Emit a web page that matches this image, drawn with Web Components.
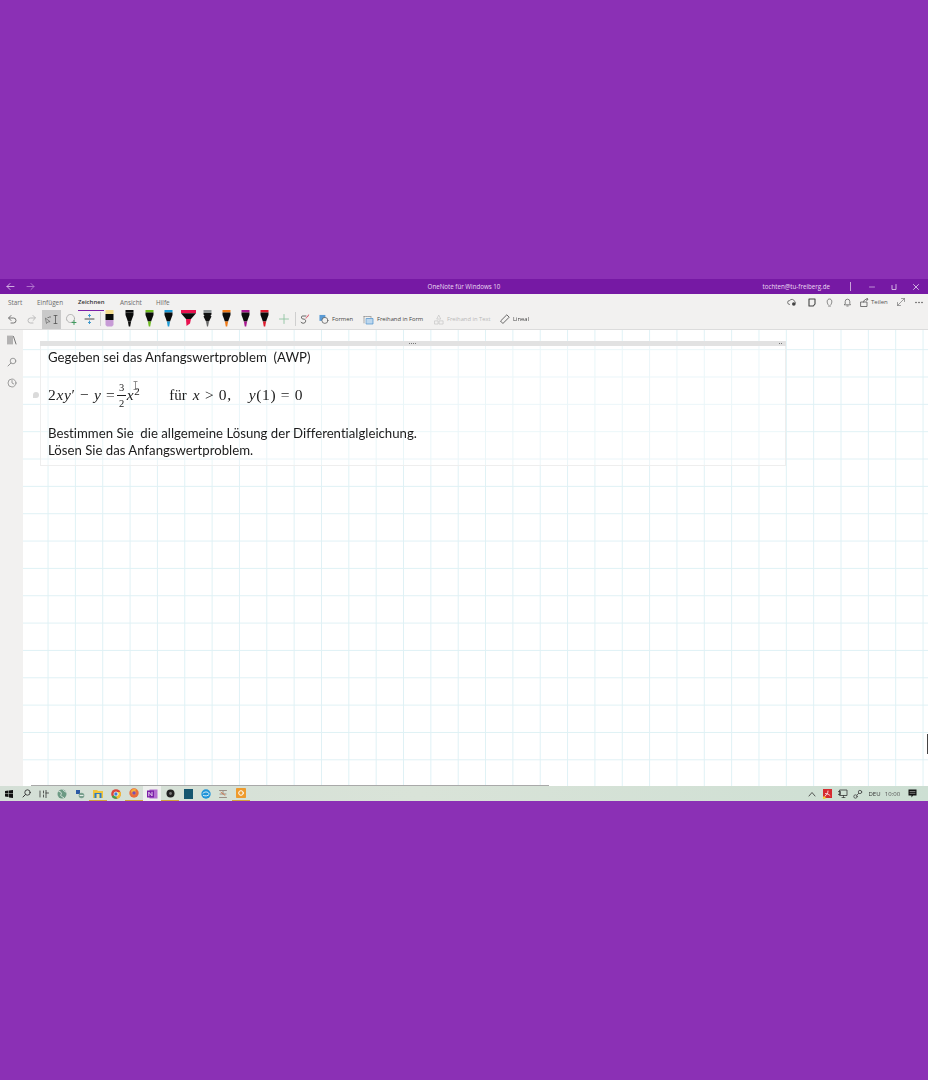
<!DOCTYPE html>
<html lang="de"><head><meta charset="utf-8"><title>OneNote</title>
<style>
html,body{margin:0;padding:0;background:#8b30b5}
body{width:928px;height:1080px;overflow:hidden;display:flex;flex-direction:column;padding-top:279px;box-sizing:border-box;font-family:"Open Sans","Liberation Sans",sans-serif}
</style></head><body>
<app-window>
  <title-bar></title-bar>
  <ribbon-tabs></ribbon-tabs>
  <ribbon-tools></ribbon-tools>
  <work-area></work-area>
  <task-bar></task-bar>
</app-window>
<script>
const def=(n,html)=>customElements.define(n,class extends HTMLElement{
  connectedCallback(){ if(this.shadowRoot)return; this.attachShadow({mode:'open'}).innerHTML=html; }
});
const ic=(w,h,vb,body,extra='')=>`<svg width="${w}" height="${h}" viewBox="${vb}" fill="none" stroke-linecap="round" stroke-linejoin="round" ${extra}>${body}</svg>`;

def('app-window',`<style>:host{display:flex;flex-direction:column;height:522px;filter:blur(.45px);overflow:hidden}</style><slot></slot>`);

def('title-bar',`<style>
:host{display:grid;grid-template-columns:1fr auto 1fr;align-items:center;height:15px;background:#7619a4;color:#ecdcf3;font-size:6.2px;flex:none}
.nav{display:flex;padding-left:6px;gap:11px}
.r{display:flex;align-items:center;justify-content:flex-end;padding-right:8px}
.sep{width:1px;height:9px;background:#c9a3da;margin-left:20px}
.w{display:flex;align-items:center;margin-left:17px;gap:14px}
</style>
<div class="nav">
${ic(9,9,'0 0 9 9','<path d="M8 4.500H1M4 1.500 1 4.500l3 3" stroke="#d9bde8" stroke-width=".9"/>')}
${ic(9,9,'0 0 9 9','<path d="M1 4.500h7M5 1.500l3 3-3 3" stroke="#b57cd0" stroke-width=".9"/>')}
</div>
<div>OneNote für Windows 10</div>
<div class="r"><span>tochten@tu-freiberg.de</span>
<div class="sep"></div>
<div class="w">
${ic(8,8,'0 0 8 8','<path d="M1.500 4h5" stroke="#c79fdb" stroke-width=".9"/>')}
${ic(8,8,'0 0 8 8','<path d="M2 2.500v4h4v-5" stroke="#dcc3ea" stroke-width=".9"/>')}
${ic(8,8,'0 0 8 8','<path d="M1.500 1.500l5 5M6.500 1.500l-5 5" stroke="#dcc3ea" stroke-width=".9"/>')}
</div></div>`);

def('ribbon-tabs',`<style>
:host{display:flex;height:16px;background:#f2f1f0;color:#6a6a6a;font-size:6.4px;flex:none;align-items:center;box-sizing:border-box;padding-left:8px;justify-content:space-between}
.l{display:flex;align-items:center}
span{white-space:nowrap}
.a{color:#333;font-weight:600;position:relative;font-size:6px}
.a::after{content:"";position:absolute;left:0;right:0;top:12px;height:1.300px;background:#7a1fa8}
.right{display:flex;align-items:center;color:#555;padding-right:5px}
svg{flex:none}
</style>
<div class="l"><span style="width:29px">Start</span><span style="width:41px">Einfügen</span><span class="a" style="width:26px;margin-right:16px">Zeichnen</span><span style="width:36px">Ansicht</span><span>Hilfe</span></div>
<div class="right">
${ic(10,9,'0 0 10 9','<path d="M2.500 6.500a2 2 0 0 1 .3-4 2.600 2.600 0 0 1 4.600.6 1.700 1.700 0 0 1 .6 2.600" stroke="#555" stroke-width=".8"/><circle cx="6.800" cy="6" r="1.800" fill="#444"/>')}
<span style="width:10px"></span>
${ic(10,9,'0 0 10 9','<path d="M2 1h6v5L6.300 8H2z" stroke="#444" stroke-width="1.100"/>')}
<span style="width:8px"></span>
${ic(9,9,'0 0 9 9','<path d="M3 6.500C1.500 4 2 1 4.500 1S7.500 4 6 6.500M3.500 8h2" stroke="#666" stroke-width=".8"/>')}
<span style="width:9px"></span>
${ic(9,9,'0 0 9 9','<path d="M1.500 6.800h6L6.800 5.500V3.500a2.300 2.300 0 0 0-4.600 0v2zM3.800 8h1.400" stroke="#666" stroke-width=".8"/>')}
<span style="width:8px"></span>
${ic(10,9,'0 0 10 9','<path d="M1 4h6v4.500H1zM3.500 4c0-1.500 1.500-3 4-3M6.500 0 8 1.200 6.700 2.700" stroke="#555" stroke-width=".8"/>')}
<span style="width:16px;margin-left:1px;font-size:6px">Teilen</span>
<span style="width:9px"></span>
${ic(10,10,'0 0 10 10','<path d="M1.500 8.500l7-7M5.500 1.500h3v3M1.500 5.500v3h3" stroke="#777" stroke-width=".7"/>')}
<span style="width:9px"></span>
${ic(8,3,'0 0 8 3','<circle cx="1" cy="1.500" r=".8" fill="#555"/><circle cx="4" cy="1.500" r=".8" fill="#555"/><circle cx="7" cy="1.500" r=".8" fill="#555"/>')}
</div>`);

const pen=(c,w=9)=>`<svg width="${w}" height="17" viewBox="0 0 ${w} 17"><path d="M.5 0h${w-1}v2.500H.5z" fill="${c}"/><path d="M.5 2.500h${w-1}v2.500L${w/2+1.600} 11.500H${w/2-1.600}L.5 5z" fill="#0b0b0b"/><path d="M${w/2-1.600} 11.500h3.200L${w/2+.700} 16.500h-1.400z" fill="${c}"/></svg>`;
const hl=(w,top,tip,body='#0b0b0b')=>`<svg width="${w}" height="17" viewBox="0 0 ${w} 17"><rect x=".5" y="0" width="${w-1}" height="4" fill="${top}"/><rect x=".5" y="4" width="${w-1}" height="6" fill="${body}"/><path d="M.5 10h${w-1}v5l-1.500 1.500H2L.5 15z" fill="${tip}"/></svg>`;
const wide=`<svg width="15" height="17" viewBox="0 0 15 17"><rect x="0" y="0" width="15" height="3.200" fill="#e8114e"/><path d="M0 3.200h15L10 9H5z" fill="#0b0b0b"/><path d="M5 9h5L9 13.500 5.500 16z" fill="#e8114e"/></svg>`;
const grey=`<svg width="9" height="17" viewBox="0 0 9 17"><rect x=".5" width="8" height="3" fill="#8f9496"/><path d="M.5 3h8v1.500l-1 1 1 1L6 11.500H3L.5 6.500l1-1-1-1z" fill="#111"/><path d="M3 11.500h3L5 16.500H4z" fill="#666"/></svg>`;

def('ribbon-tools',`<style>
:host{display:flex;align-items:center;height:20px;background:#f2f1f0;flex:none;box-sizing:border-box;border-bottom:1px solid #dcdcdc;font-size:5.800px;color:#444;padding-bottom:1px}
.c{display:flex;align-items:center;justify-content:center;flex:none;height:19px}
.sel{background:#c9c9c9}
.d{width:1px;height:14px;background:#cfcfcf;flex:none}
.t{white-space:nowrap;flex:none}
.off{color:#b8b8b8}
.p{margin-top:-2px}
</style>
<div class="c" style="width:23px">${ic(11,10,'0 0 11 10','<path d="M3 4h4.500a2.500 2.500 0 0 1 0 5H5M5 1.500 2.500 4 5 6.500" stroke="#666" stroke-width=".9"/>')}</div>
<div class="c" style="width:19px">${ic(11,10,'0 0 11 10','<path d="M8 4H3.500a2.500 2.500 0 0 0 0 5H6M6 1.500 8.500 4 6 6.500" stroke="#b5b5b5" stroke-width=".9"/>')}</div>
<div class="c sel" style="width:19px">${ic(15,11,'0 0 15 11','<path d="M1.500 4.500l1 5 1.200-1.500 2-.3z" stroke="#666" stroke-width=".7"/><path d="M6 2.500v1M4.500 3.500h-.5M10 1.500h3M11.500 1.500v8M10 9.500h3" stroke="#555" stroke-width=".8"/>')}</div>
<div class="c" style="width:19px">${ic(12,12,'0 0 12 12','<circle cx="5.500" cy="5.500" r="4" stroke="#9a9a9a" stroke-width=".8" stroke-dasharray="1.500 1"/><path d="M9 7.500v4M7 9.500h4" stroke="#3f9a5e" stroke-width="1"/>')}</div>
<div class="c" style="width:18px">${ic(11,12,'0 0 11 12','<path d="M1 6h9" stroke="#333" stroke-width=".9"/><path d="M5.500 1.500v2.500M4.300 2.700l1.200-1.200 1.200 1.200M5.500 10.500V8M4.300 9.300l1.200 1.200 1.200-1.200" stroke="#2a8fc9" stroke-width=".9"/>')}</div>
<div class="c" style="width:2px"></div><div class="d"></div><div class="c" style="width:3px"></div>
<div class="c p" style="width:11px;margin-right:10px">${hl(9,'#f3dc8f','#c79bd6')}</div>
<div class="c p" style="width:9px;margin-right:11px">${pen('#0b0b0b')}</div>
<div class="c p" style="width:9px;margin-right:10px">${pen('#6dbb1f')}</div>
<div class="c p" style="width:9px;margin-right:8px">${pen('#1b9ad6')}</div>
<div class="c p" style="width:15px;margin-right:7px">${wide}</div>
<div class="c p" style="width:9px;margin-right:10px">${grey}</div>
<div class="c p" style="width:9px;margin-right:10px">${pen('#f07a17')}</div>
<div class="c p" style="width:9px;margin-right:10px">${pen('#a8178f')}</div>
<div class="c p" style="width:9px;margin-right:9px">${pen('#de1a2c')}</div>
<div class="c" style="width:12px;margin-right:5px">${ic(10,10,'0 0 10 10','<path d="M5 .5v9M.5 5h9" stroke="#8fc4a0" stroke-width=".9"/>')}</div>
<div class="d"></div>
<div class="c" style="width:17px;margin-right:6px">${ic(11,12,'0 0 11 12','<path d="M7 3H3.500C2 3 2 6 4 6s3 1 2.500 2.800-3.500 2-4.500.5" stroke="#555" stroke-width=".9"/><path d="M7 5c1-.3 2-1.500 2.500-3" stroke="#d8334a" stroke-width=".9"/>')}</div>
<div class="c" style="width:10px;margin-right:3px">${ic(11,11,'0 0 11 11','<rect x=".5" y=".5" width="6.500" height="6.500" fill="#5b9bd5"/><circle cx="6.500" cy="6.500" r="3.300" fill="#f2f1f0" stroke="#555" stroke-width=".8"/>')}</div>
<div class="t" style="width:31px">Formen</div>
<div class="c" style="width:11px;margin-right:3px">${ic(11,11,'0 0 11 11','<path d="M1 2.500h7M1 2.500V9M8 2.500V4" stroke="#888" stroke-width=".7" stroke-dasharray="1 .8"/><rect x="3.500" y="4.500" width="6.500" height="5.500" fill="#bcd7ee" stroke="#4a8fcb" stroke-width=".7"/>')}</div>
<div class="t" style="width:57px">Freihand in Form</div>
<div class="c" style="width:10px;margin-right:3px">${ic(11,11,'0 0 11 11','<path d="M5 1 3 5h4zM1 7h3.500v3.500H1zM6 7h4v3.500H6z" stroke="#c2c2c2" stroke-width=".7"/>')}</div>
<div class="t off" style="width:53px">Freihand in Text</div>
<div class="c" style="width:10px;margin-right:3px">${ic(10,10,'0 0 10 10','<path d="M.8 6.800 6.800.8l2.400 2.400-6 6z" stroke="#444" stroke-width=".8"/>')}</div>
<div class="t">Lineal</div>`);

def('work-area',`<style>:host{display:flex;flex:1;min-height:0}</style>
<side-rail></side-rail><note-canvas></note-canvas>`);

def('side-rail',`<style>:host{display:flex;flex-direction:column;align-items:center;width:23px;flex:none;background:#f2f1f0;padding-top:5px;box-sizing:border-box;gap:11.500px}</style>
${ic(10,10,'0 0 10 10','<path d="M1 1v8M3 1v8M5 1v8M6.500 1.500 9 9" stroke="#666" stroke-width=".9"/>')}
${ic(10,10,'0 0 10 10','<circle cx="6" cy="4" r="2.800" stroke="#888" stroke-width=".8"/><path d="M4 6 1 9" stroke="#888" stroke-width=".9"/>')}
${ic(10,10,'0 0 10 10','<circle cx="5" cy="5" r="4" stroke="#888" stroke-width=".8"/><path d="M5 2.500V5l1.800 1" stroke="#888" stroke-width=".8"/>')}`);

def('note-canvas',`<style>
:host{display:block;flex:1;position:relative;background-color:#fff;
background-image:linear-gradient(to right,#dff1f5 1px,transparent 1px),linear-gradient(to bottom,#dff1f5 1px,transparent 1px);
background-size:27.35px 27.35px;background-position:-2.800px -8.200px;padding:11px 0 0 17px;box-sizing:border-box}
.hscroll{position:absolute;left:8px;bottom:0;width:518px;height:1.500px;background:#a9a9a9}
.vscroll{position:absolute;right:0;top:404px;width:1.500px;height:20px;background:#444}
</style>
<note-box>
  <note-line>Gegeben sei das Anfangswertproblem&nbsp; (AWP)</note-line>
  <math-line></math-line>
  <note-line style="margin-top:8.500px">Bestimmen Sie&nbsp; die allgemeine Lösung der Differentialgleichung.</note-line>
  <note-line>Lösen Sie das Anfangswertproblem.</note-line>
</note-box>
<div class="hscroll"></div><div class="vscroll"></div>`);

def('note-box',`<style>
:host{display:block;width:746px;height:125px;box-sizing:border-box;border:1px solid #eeeeee;border-top:0;background:rgba(255,255,255,.35);position:relative}
.bar{height:5px;background:#e2e2e2;position:relative;margin:0 -1px}
.g{position:absolute;top:2px;height:1px;background:repeating-linear-gradient(to right,#777 0 1px,transparent 1px 2px)}
.body{padding:2.500px 0 0 7px}
</style>
<div class="bar"><div class="g" style="left:369px;width:8px"></div><div class="g" style="left:739px;width:4px"></div></div>
<div class="body"><slot></slot></div>`);

def('note-line',`<style>:host{display:block;height:17px;line-height:17px;font-family:Lato,"Liberation Sans",sans-serif;font-size:13.200px;font-variant-ligatures:none;color:#1c1c1c;white-space:nowrap}</style><slot></slot>`);

def('math-line',`<style>
:host{display:flex;align-items:center;height:42px;margin-top:8.500px;position:relative;font-family:"Liberation Serif",serif;font-size:15.500px;letter-spacing:.65px;color:#1c1c1c;white-space:nowrap}
i{font-style:italic}
.f{display:inline-flex;flex-direction:column;align-items:center;font-size:10.500px;line-height:11px;margin:0 1px 0 2px;letter-spacing:0}
.f b{font-weight:400;display:block}
.f b:first-child{border-bottom:1px solid #1c1c1c;padding:0 1.500px 2px}
.f b:last-child{padding-top:2px}
sup{font-size:11px;line-height:0;position:relative;top:-5px;vertical-align:baseline}
.fu{font-size:15px;letter-spacing:0}
.handle{position:absolute;left:-15px;top:18px;width:6px;height:6px;background:#dadada;border-radius:50% 50% 50% 0}
.beam{position:absolute;left:84.500px;top:7px}
.row{display:inline-flex;align-items:center}
</style>
<div class="handle"></div>
<span class="row"><span>2<i>xy</i>′ − <i>y</i> = </span><span class="f"><b>3</b><b>2</b></span><span><i>x</i><sup>2</sup></span></span>
<span class="fu" style="margin-left:29px">für</span>
<span style="margin-left:6px"><i>x</i> &gt; 0,</span>
<span style="margin-left:17px"><i>y</i>(1) = 0</span>
<svg class="beam" width="5" height="9" viewBox="0 0 5 9" fill="none"><path d="M.5.500h4M2.500.500v8M.5 8.500h4" stroke="#777" stroke-width=".8"/></svg>`);

const tb=(w,inner,opts='')=>`<div class="i ${opts}" style="width:${w}px">${inner}</div>`;
def('task-bar',`<style>
:host{display:flex;align-items:center;height:15px;flex:none;background:linear-gradient(to right,#d4dfd6,#d9e3d8 45%,#cddfd3);font-size:6px;color:#333;position:relative;box-sizing:border-box}
.i{display:flex;align-items:center;justify-content:center;height:15px;flex:none;box-sizing:border-box}
.u{border-bottom:1px solid #d2a33a}
.act{background:#eef0ee}
.sp{flex:1}
</style>
${tb(17,ic(8,8,'0 0 8 8','<path d="M0 1l3.500-.5v3H0zM4 .4 8 0v3.500H4zM0 4h3.500v3L0 6.500zM4 4h4v4l-4-.6z" fill="#111"/>'))}
${tb(18,ic(9,9,'0 0 9 9','<circle cx="5.500" cy="3.500" r="2.700" stroke="#333" stroke-width=".9"/><path d="M3.500 5.500 1 8" stroke="#333" stroke-width="1"/>'))}
${tb(18,ic(10,8,'0 0 10 8','<path d="M1 1v6M4.500 1v2M4.500 5v2M7 0v8M7 3h2.500" stroke="#333" stroke-width=".8"/>'))}
${tb(18,ic(10,10,'0 0 10 10','<circle cx="5" cy="5" r="4.500" fill="#6c9a84"/><path d="M2 2.500c2 0 3 1.500 2 3s1 2 2.500 3M6 1c1 1 2 2 3 2" stroke="#dfe9e3" stroke-width="1"/>'))}
${tb(18,ic(10,10,'0 0 10 10','<rect x="1" y="1" width="4" height="4" fill="#2c5aa5"/><circle cx="6.500" cy="6.500" r="2.800" fill="#7aa08e"/><path d="M5 6.500h3" stroke="#fff" stroke-width=".8"/>'))}
${tb(18,ic(10,9,'0 0 10 9','<path d="M0 1h4l1 1h5v7H0z" fill="#f1c43b"/><rect x="1.500" y="4" width="7" height="5" fill="#2e7bc5"/><rect x="3.500" y="5" width="3" height="4" fill="#f5e08c"/>'),'u')}
${tb(18,ic(10,10,'0 0 10 10','<circle cx="5" cy="5" r="4.800" fill="#d9453a"/><path d="M5 5 .8 7.500A4.800 4.800 0 0 0 6 9.700z" fill="#3ea14b"/><path d="M5 5l1 4.700A4.800 4.800 0 0 0 9.500 3H5z" fill="#f3c02e"/><circle cx="5" cy="5" r="2.100" fill="#3f7fd9" stroke="#fff" stroke-width=".7"/>'))}
${tb(18,ic(10,10,'0 0 10 10','<circle cx="5" cy="5" r="4.700" fill="#ea6b3a"/><path d="M2 3a4 4 0 0 1 6-1c-2 0-2 1-1 2 1 2-2 4-4 2" fill="#f6b23b"/><circle cx="5" cy="5" r="1.800" fill="#7f4bb0"/>'),'u')}
${tb(18,ic(11,10,'0 0 11 10','<rect x="2.500" y=".5" width="8" height="9" fill="#b46ed0"/><rect x="0" y="1.500" width="7" height="7" fill="#7a1fa8"/><path d="M1.800 6.800V3.200L5 6.800V3.200" stroke="#fff" stroke-width=".8"/>'),'act')}
${tb(18,ic(9,9,'0 0 9 9','<circle cx="4.500" cy="4.500" r="4" fill="#222"/><circle cx="4.500" cy="4.500" r="1.400" fill="#777"/>'),'u')}
${tb(18,ic(9,10,'0 0 9 10','<rect width="9" height="10" fill="#15566f"/>'))}
${tb(17,ic(10,10,'0 0 10 10','<circle cx="5" cy="5" r="4.700" fill="#1f94d8"/><path d="M2 4.200c2-2 5-1.500 6 .3M2.500 6.500c2 .8 4 .5 5.500-.8" stroke="#fff" stroke-width=".9"/>'))}
${tb(18,ic(10,10,'0 0 10 10','<path d="M1.500 1.500h7M5 1.500V5M2 5l6 0M1.500 8.500h7" stroke="#9b8f86" stroke-width="1"/><path d="M3 3.200l4 3.200" stroke="#d6764a" stroke-width=".9"/>'))}
${tb(18,ic(10,10,'0 0 10 10','<rect width="10" height="10" rx=".8" fill="#ee9b2e"/><circle cx="5" cy="5" r="2.300" stroke="#fff" stroke-width="1"/>'),'u')}
<div class="sp"></div>
${tb(14,ic(8,6,'0 0 8 6','<path d="M1 5l3-3.500L7 5" stroke="#333" stroke-width=".8"/>'))}
${tb(16,ic(9,10,'0 0 9 10','<rect width="9" height="9" fill="#d62a2f"/><path d="M2 7c2-1 3-3 3-5M2.500 4.500c2 0 3.500 1 4.500 2" stroke="#fff" stroke-width=".8"/><rect y="7.500" width="2.500" height="2.500" fill="#f4d03f"/>'))}
${tb(15,ic(10,9,'0 0 10 9','<rect x="2" y="1" width="7" height="5.500" stroke="#333" stroke-width=".8"/><path d="M4 8.500h3M5.500 6.500v2M0 2.500h2.500v3H0z" stroke="#333" stroke-width=".7"/>'))}
${tb(15,ic(10,10,'0 0 10 10','<circle cx="2.500" cy="7.500" r="1.700" stroke="#444" stroke-width=".8"/><circle cx="7" cy="3" r="1.700" stroke="#444" stroke-width=".8"/><path d="M4 6l1.700-1.700" stroke="#444" stroke-width=".8"/>'))}
<div class="i" style="width:19px">DEU</div>
<div class="i" style="width:17px;color:#555">10:00</div>
<div class="i" style="width:23px">${ic(9,9,'0 0 9 9','<path d="M.5.500h8v6H5L3.500 8.500v-2h-3z" fill="#111"/><path d="M2 2.500h5M2 4.300h5" stroke="#ddd" stroke-width=".5"/>')}</div>
<div class="i" style="width:4px"></div>`);
</script>
</body></html>
